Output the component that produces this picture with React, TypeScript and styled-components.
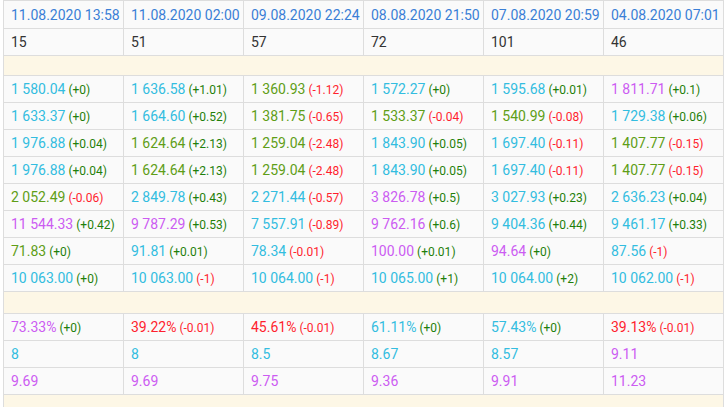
import styled, { createGlobalStyle } from "styled-components";

const GlobalStyle = createGlobalStyle`
  body {
    margin: 0;
    background: #fff;
    font-family: Roboto, "Liberation Sans", sans-serif;
  }
`;

const Wrap = styled.div`
  padding-left: 3px;
  width: 724px;
  overflow: hidden;
`;

const Table = styled.table`
  border-collapse: collapse;
  table-layout: fixed;
  width: 721px;
  font-family: Roboto, "Liberation Sans", sans-serif;
  font-size: 14px;
`;

const Cell = styled.td<{ $head?: boolean }>`
  border: 1px solid #dddddd;
  background: #fafafa;
  height: ${(p) => (p.$head ? 28 : 27)}px;
  padding: 0 0 0 7px;
  box-sizing: border-box;
  white-space: nowrap;
  overflow: hidden;
  color: ${(p) => (p.$head ? "#3a7fd6" : "#333")};
`;

const Spacer = styled.td<{ $h: number }>`
  height: ${(p) => p.$h}px;
  padding: 0;
  background: #fdf7e6;
  border-left: 1px solid #dddddd;
  border-right: 1px solid #dddddd;
`;

const colors: Record<string, string> = {
  c: "#33bde0",
  g: "#5f9e17",
  p: "#cc5cf2",
  r: "#ff1f2e",
};

const Value = styled.span<{ $c: string }>`
  color: ${(p) => colors[p.$c]};
`;

const Change = styled.span<{ $neg: boolean }>`
  font-size: 12px;
  margin-left: 3px;
  color: ${(p) => (p.$neg ? "#ff1f2e" : "#1f7f0a")};
`;

type Item = [string, string, string?];

const heads = [
  "11.08.2020 13:58",
  "11.08.2020 02:00",
  "09.08.2020 22:24",
  "08.08.2020 21:50",
  "07.08.2020 20:59",
  "04.08.2020 07:01",
];
const counts = ["15", "51", "57", "72", "101", "46"];

const r3: Item[] = [
  ["1 976.88", "c", "+0.04"],
  ["1 624.64", "g", "+2.13"],
  ["1 259.04", "g", "-2.48"],
  ["1 843.90", "c", "+0.05"],
  ["1 697.40", "c", "-0.11"],
  ["1 407.77", "g", "-0.15"],
];

const prices: Item[][] = [
  [
    ["1 580.04", "c", "+0"],
    ["1 636.58", "c", "+1.01"],
    ["1 360.93", "g", "-1.12"],
    ["1 572.27", "c", "+0"],
    ["1 595.68", "c", "+0.01"],
    ["1 811.71", "p", "+0.1"],
  ],
  [
    ["1 633.37", "c", "+0"],
    ["1 664.60", "c", "+0.52"],
    ["1 381.75", "g", "-0.65"],
    ["1 533.37", "g", "-0.04"],
    ["1 540.99", "g", "-0.08"],
    ["1 729.38", "c", "+0.06"],
  ],
  r3,
  r3,
  [
    ["2 052.49", "g", "-0.06"],
    ["2 849.78", "c", "+0.43"],
    ["2 271.44", "c", "-0.57"],
    ["3 826.78", "p", "+0.5"],
    ["3 027.93", "c", "+0.23"],
    ["2 636.23", "c", "+0.04"],
  ],
  [
    ["11 544.33", "p", "+0.42"],
    ["9 787.29", "p", "+0.53"],
    ["7 557.91", "c", "-0.89"],
    ["9 762.16", "p", "+0.6"],
    ["9 404.36", "c", "+0.44"],
    ["9 461.17", "c", "+0.33"],
  ],
  [
    ["71.83", "g", "+0"],
    ["91.81", "c", "+0.01"],
    ["78.34", "c", "-0.01"],
    ["100.00", "p", "+0.01"],
    ["94.64", "p", "+0"],
    ["87.56", "c", "-1"],
  ],
  [
    ["10 063.00", "c", "+0"],
    ["10 063.00", "c", "-1"],
    ["10 064.00", "c", "-1"],
    ["10 065.00", "c", "+1"],
    ["10 064.00", "c", "+2"],
    ["10 062.00", "c", "-1"],
  ],
];

const stats: Item[][] = [
  [
    ["73.33%", "p", "+0"],
    ["39.22%", "r", "-0.01"],
    ["45.61%", "r", "-0.01"],
    ["61.11%", "c", "+0"],
    ["57.43%", "c", "+0"],
    ["39.13%", "r", "-0.01"],
  ],
  [
    ["8", "c"],
    ["8", "c"],
    ["8.5", "c"],
    ["8.67", "c"],
    ["8.57", "c"],
    ["9.11", "p"],
  ],
  [
    ["9.69", "p"],
    ["9.69", "p"],
    ["9.75", "p"],
    ["9.36", "p"],
    ["9.91", "p"],
    ["11.23", "p"],
  ],
];

function DataRow({ items }: { items: Item[] }) {
  return (
    <tr>
      {items.map(([v, c, d], i) => (
        <Cell key={i}>
          <Value $c={c}>{v}</Value>
          {d && <Change $neg={d.startsWith("-")}>({d})</Change>}
        </Cell>
      ))}
    </tr>
  );
}

export default function App() {
  return (
    <Wrap>
      <GlobalStyle />
      <Table>
        <colgroup>
          {heads.map((h) => (
            <col key={h} style={{ width: 120 }} />
          ))}
        </colgroup>
        <tbody>
          <tr>
            {heads.map((h) => (
              <Cell key={h} $head>
                {h}
              </Cell>
            ))}
          </tr>
          <tr>
            {counts.map((c, i) => (
              <Cell key={i}>{c}</Cell>
            ))}
          </tr>
          <tr>
            <Spacer colSpan={6} $h={19} />
          </tr>
          {prices.map((row, i) => (
            <DataRow key={i} items={row} />
          ))}
          <tr>
            <Spacer colSpan={6} $h={21} />
          </tr>
          {stats.map((row, i) => (
            <DataRow key={i} items={row} />
          ))}
          <tr>
            <Spacer colSpan={6} $h={20} />
          </tr>
        </tbody>
      </Table>
    </Wrap>
  );
}
